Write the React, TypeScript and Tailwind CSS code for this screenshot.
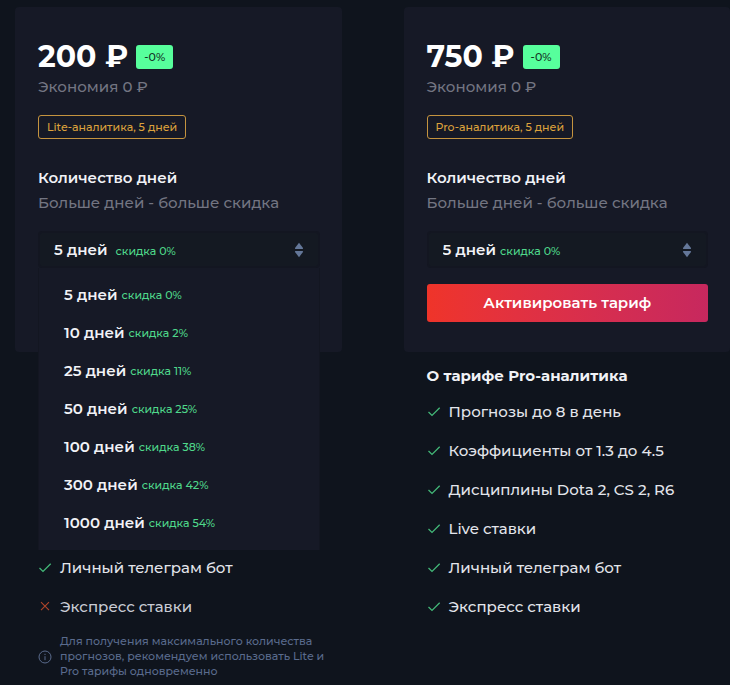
import React, { useState } from 'react';

interface Feature {
  text: string;
  included: boolean;
}

interface Plan {
  id: string;
  name: string;
  pricePerDay: number;
  features: Feature[];
  note?: string;
}

const periods = [
  { days: 5, discount: 0 },
  { days: 10, discount: 2 },
  { days: 25, discount: 11 },
  { days: 50, discount: 25 },
  { days: 100, discount: 38 },
  { days: 300, discount: 42 },
  { days: 1000, discount: 54 },
];

// How many feature rows lie under the opened menu
const coveredRows = 4;

const plans: Plan[] = [
  {
    id: 'lite',
    name: 'Lite-аналитика',
    pricePerDay: 40,
    features: [
      { text: 'Прогнозы до 3 в день', included: true },
      { text: 'Коэффициенты от 1.3 до 4.5', included: true },
      { text: 'Дисциплины Dota 2, CS 2', included: true },
      { text: 'Live ставки', included: true },
      { text: 'Личный телеграм бот', included: true },
      { text: 'Экспресс ставки', included: false },
    ],
    note: 'Для получения максимального количества прогнозов, рекомендуем использовать Lite и Pro тарифы одновременно',
  },
  {
    id: 'pro',
    name: 'Pro-аналитика',
    pricePerDay: 150,
    features: [
      { text: 'Прогнозы до 8 в день', included: true },
      { text: 'Коэффициенты от 1.3 до 4.5', included: true },
      { text: 'Дисциплины Dota 2, CS 2, R6', included: true },
      { text: 'Live ставки', included: true },
      { text: 'Личный телеграм бот', included: true },
      { text: 'Экспресс ставки', included: true },
    ],
  },
];

const CheckIcon = () => (
  <svg viewBox="0 0 14 14" className="h-3.5 w-3.5 shrink-0" fill="none" stroke="#43b878" strokeWidth="1.3" aria-hidden="true">
    <path d="M1.5 7 5 10.4 12.7 2.7" />
  </svg>
);

const CrossIcon = () => (
  <svg viewBox="0 0 14 14" className="h-3.5 w-3.5 shrink-0" fill="none" stroke="#b0452a" strokeWidth="1.1" aria-hidden="true">
    <path d="M3 2.2 11 10.2M11 2.2 3 10.2" />
  </svg>
);

const InfoIcon = () => (
  <svg viewBox="0 0 14 14" className="h-3.5 w-3.5 shrink-0" fill="none" stroke="#5a6b8d" aria-hidden="true">
    <circle cx="7" cy="7" r="6" />
    <path d="M7 6.2V10.2M7 3.8V5" />
  </svg>
);

const SortIcon = () => (
  <svg viewBox="0 0 10 16" className="h-4 w-2.5 shrink-0" fill="#647799" aria-hidden="true">
    <path d="M5 .8 9 6Q9.3 7 8.4 7H1.6Q.7 7 1 6Z" />
    <path d="M5 15.2 9 10Q9.3 9 8.4 9H1.6Q.7 9 1 10Z" />
  </svg>
);

interface PeriodSelectProps {
  id: string;
  value: number;
  open: boolean;
  onToggle: (open: boolean) => void;
  onChange: (days: number) => void;
}

const PeriodSelect: React.FC<PeriodSelectProps> = ({ id, value, open, onToggle, onChange }) => {
  const current = periods.find((p) => p.days === value) ?? periods[0];

  const pick = (days: number) => {
    onChange(days);
    onToggle(false);
  };

  return (
    <div className="relative mt-4">
      <div
        className={`flex h-[37px] cursor-pointer items-center rounded border-2 border-[#131621] bg-[#141922] px-3.5 ${open ? 'gap-2' : 'gap-1'}`}
        onMouseDown={(e) => {
          e.preventDefault();
          onToggle(!open);
        }}
      >
        <select
          id={id}
          value={value}
          onChange={(e) => onChange(Number(e.target.value))}
          className="field-sizing-content cursor-pointer appearance-none bg-transparent font-semibold text-[#f1f2f6] outline-none"
        >
          {periods.map((p) => (
            <option key={p.days} value={p.days}>{p.days} дней</option>
          ))}
        </select>
        <span className="pt-0.5 text-[11px] font-medium text-[#4fd88b]">скидка {current.discount}%</span>
        <span className="ml-auto"><SortIcon /></span>
      </div>

      {/* Menu */}
      {open && (
        <ul className="absolute inset-x-0 top-full z-10 border-x border-[#131621] bg-[#161926] py-2">
          {periods.map((p) => (
            <li key={p.days}>
              <button type="button" onClick={() => pick(p.days)} className="flex h-[38px] w-full items-center gap-1 px-[25px]">
                <span className="font-semibold text-[#f1f2f6]">{p.days} дней</span>
                <span className="text-[11px] font-medium text-[#4fd88b]">скидка {p.discount}%</span>
              </button>
            </li>
          ))}
        </ul>
      )}
    </div>
  );
};

const PlanColumn: React.FC<{ plan: Plan; defaultOpen?: boolean }> = ({ plan, defaultOpen = false }) => {
  const [days, setDays] = useState(5);
  const [open, setOpen] = useState(defaultOpen);
  const discount = periods.find((p) => p.days === days)?.discount ?? 0;
  const fullPrice = plan.pricePerDay * days;
  const saved = Math.round((fullPrice * discount) / 100);
  // Keeps what the menu covers out of the tab order
  const covered = open ? 'invisible' : '';

  return (
    <section>
      {/* Card */}
      <div className="rounded bg-[#161926] pt-8 pr-[22px] pb-[30px] pl-[23px]">
        <div className="flex h-9 items-center gap-2">
          <span className="text-3xl font-bold text-white">{fullPrice - saved} ₽</span>
          <span className="flex h-6 items-center rounded-[3px] bg-[#57ff9c] px-2 text-[11px] font-medium text-[#12301f]">-{discount}%</span>
        </div>
        <p className="font-medium text-[#737582]">Экономия {saved} ₽</p>
        <div className="mt-4 flex">
          <span className="flex h-6 items-center rounded-[3px] border border-[#c4933f] px-2 text-[11px] font-medium text-[#dca13c]">
            {plan.name}, {days} дней
          </span>
        </div>
        <label htmlFor={`period-${plan.id}`} className="mt-[27px] block font-semibold text-[#f1f2f6]">Количество дней</label>
        <p className="mt-px font-medium text-[#737582]">Больше дней - больше скидка</p>
        <PeriodSelect id={`period-${plan.id}`} value={days} open={open} onToggle={setOpen} onChange={setDays} />
        <button type="button" className={`mt-4 h-[38px] w-full rounded-[3px] bg-linear-to-r from-[#ef3429] to-[#c7285e] font-semibold text-white ${covered}`}>
          Активировать тариф
        </button>
      </div>

      {/* Features */}
      <div className="pt-3 pl-[23px]">
        <h2 className={`font-bold text-[#f1f2f6] ${covered}`}>О тарифе {plan.name}</h2>
        <ul className="mt-1">
          {plan.features.map((f, i) => (
            <li key={f.text} className={`flex h-[39px] items-center gap-2 ${i < coveredRows ? covered : ''}`}>
              {f.included ? <CheckIcon /> : <CrossIcon />}
              <span className={`font-medium ${f.included ? 'text-[#e3e5eb]' : 'text-[#c9ccd5]'}`}>{f.text}</span>
            </li>
          ))}
        </ul>
        {plan.note && (
          <div className="mt-2 flex items-center gap-2">
            <InfoIcon />
            <p className="text-[11px] leading-[15px] font-medium text-[#5a6b8d]">{plan.note}</p>
          </div>
        )}
      </div>
    </section>
  );
};

export default function App() {
  return (
    <main className="min-h-screen bg-[#0f141d] pt-[7px] pl-[15px] font-['Montserrat','Inter',sans-serif] text-[15px] leading-6">
      <div className="grid grid-cols-2 gap-x-[62px]">
        {plans.map((plan) => (
          <PlanColumn key={plan.id} plan={plan} defaultOpen={plan.id === 'lite'} />
        ))}
      </div>
    </main>
  );
}
